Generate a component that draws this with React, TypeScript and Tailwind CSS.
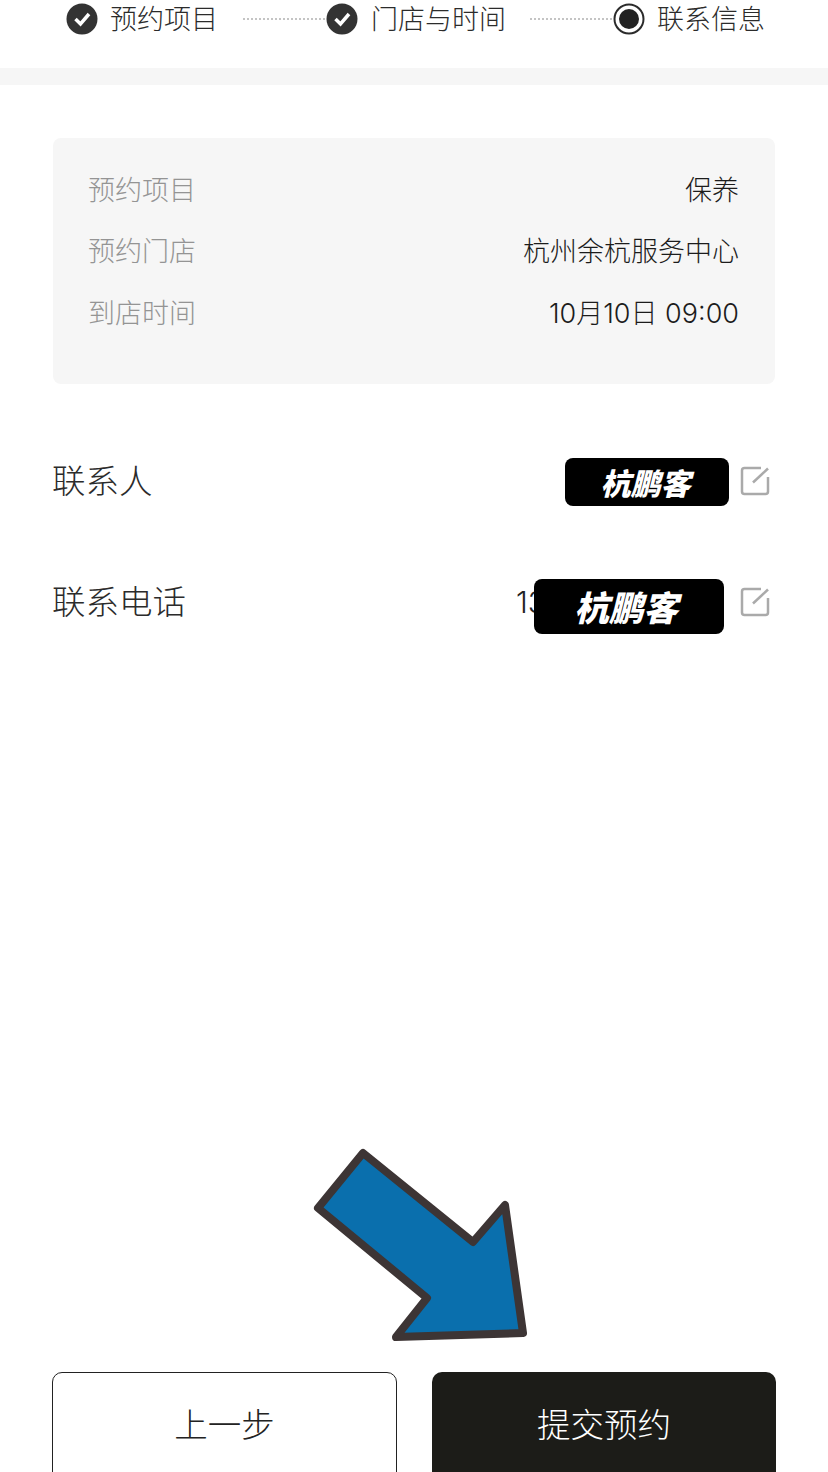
import React from 'react';

const font = 'font-["Noto_Sans_CJK_SC","Noto_Sans",sans-serif]';

const summary = [
  { label: '预约项目', value: '保养' },
  { label: '预约门店', value: '杭州余杭服务中心' },
  { label: '到店时间', value: '10月10日 09:00' },
];

function CheckIcon() {
  return (
    <svg width="32" height="32" viewBox="0 0 32 32" className="shrink-0">
      <circle cx="16" cy="16" r="15.500" fill="#333333" />
      <path d="M9.500 16l5 5 8.500-10" fill="none" stroke="#ffffff" strokeWidth="3.500" />
    </svg>
  );
}

function ActiveIcon() {
  return (
    <svg width="32" height="32" viewBox="0 0 32 32" className="shrink-0">
      <circle cx="16" cy="16" r="14.500" fill="none" stroke="#2b2b2b" strokeWidth="2" />
      <circle cx="16" cy="16" r="10" fill="#222222" />
    </svg>
  );
}

function EditIcon() {
  return (
    <svg width="30" height="30" viewBox="0 0 30 30" className="shrink-0">
      <path
        d="M21 2H4.500a2.500 2.500 0 0 0-2.500 2.500v21a2.500 2.500 0 0 0 2.500 2.500h21a2.500 2.500 0 0 0 2.500-2.500V11"
        fill="none"
        stroke="#aaaaaa"
        strokeWidth="2.500"
      />
      <path d="M28 2.500L13 16.500" fill="none" stroke="#aaaaaa" strokeWidth="2.500" />
    </svg>
  );
}

function Dots() {
  return <div className="mx-[1px] h-0 flex-1 border-t-2 border-dotted border-[#c4c4c4]" />;
}

export default function App() {
  return (
    <div className={`relative flex h-[1472px] w-[828px] flex-col overflow-hidden bg-white ${font}`}>
      {/* steps */}
      <div className="flex h-[68px] shrink-0 items-start pl-[66px] pt-[3px] text-[27px] font-light leading-[30px] text-[#2b2b2b]">
        <CheckIcon />
        <span className="ml-[12px] whitespace-nowrap">预约项目</span>
        <div className="ml-[24px] flex h-[32px] w-[84px] items-center"><Dots /></div>
        <CheckIcon />
        <span className="ml-[13px] whitespace-nowrap">门店与时间</span>
        <div className="ml-[23px] flex h-[32px] w-[84px] items-center"><Dots /></div>
        <ActiveIcon />
        <span className="ml-[12px] whitespace-nowrap">联系信息</span>
      </div>
      <div className="h-[17px] shrink-0 bg-[#f6f6f6]" />

      {/* summary card */}
      <div className="mx-[53px] mt-[53px] h-[246px] shrink-0 rounded-lg bg-[#f6f6f6] pl-[35px] pr-[36px] pt-[20px] text-[27px] font-light">
        {summary.map((row) => (
          <div key={row.label} className="flex h-[61.500px] items-center justify-between">
            <span className="text-[#949494]">{row.label}</span>
            <span className='mt-[4px] font-["Inter","Noto_Sans_CJK_SC",sans-serif] text-[#1c1c1c]'>{row.value}</span>
          </div>
        ))}
      </div>

      {/* contact */}
      <div className="ml-[52px] mr-[57px] mt-[36px] shrink-0 text-[33.500px] font-light text-[#2b2b2b]">
        <div className="flex h-[121px] items-center justify-between">
          <span className="-mt-[2px]">联系人</span>
          <div className="relative mr-[1px] flex items-center">
            <div className="absolute right-[41px] top-[-8px] flex h-[48px] w-[164px] items-center justify-center rounded-lg bg-black pr-[3px] text-[30px] font-black italic leading-none text-white">
              杭鹏客
            </div>
            <EditIcon />
          </div>
        </div>
        <div className="flex h-[121px] items-center justify-between">
          <span className="-mt-[2px]">联系电话</span>
          <div className="relative mr-[1px] flex items-center">
            <span className='absolute left-[-224px] top-[-5px] whitespace-nowrap font-["Inter",sans-serif] text-[30px] leading-[40px] text-[#222222]'>13</span>
            <div className="absolute right-[46px] top-[-8px] flex h-[55px] w-[190px] items-center justify-center rounded-lg bg-black pr-[6px] text-[34.500px] font-black italic leading-none text-white">
              杭鹏客
            </div>
            <EditIcon />
          </div>
        </div>
      </div>

      {/* arrow */}
      <svg className="absolute left-[310px] top-[1145px]" width="224" height="200" viewBox="310 1145 224 200">
        <path
          d="M363 1153L473 1242L505 1205L523 1333L396 1337L427 1298L318 1208Z"
          fill="#0a6fad"
          stroke="#3d3535"
          strokeWidth="8"
          strokeLinejoin="round"
        />
      </svg>

      {/* buttons, they run past the bottom of the page */}
      <div className="mt-auto flex h-[100px] shrink-0 gap-[35px] px-[52px] text-[33.500px] font-light">
        <button className="h-[120px] w-[345px] shrink-0 rounded-[10px] border border-[#222222] bg-white pb-[18px] text-[#222222]">
          上一步
        </button>
        <button className="h-[120px] w-[344px] shrink-0 rounded-[10px] bg-[#1c1c18] pb-[18px] text-white">提交预约</button>
      </div>
    </div>
  );
}
